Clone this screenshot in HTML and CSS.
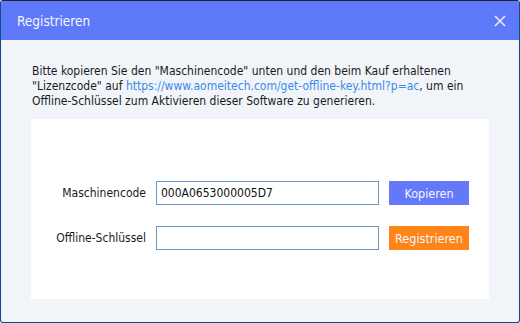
FILE: index.html
```html
<!DOCTYPE html>
<html lang="de">
  <head>
    <meta charset="UTF-8" />
    <title>Registrieren</title>
    <link rel="stylesheet" href="styles.css">
  </head>
  <body>
    <div class="window">
      <div class="titlebar">
        <span class="title">Registrieren</span>
        <svg class="close" width="14" height="14" viewBox="0 0 14 14" aria-label="Schließen">
          <path d="M2 2 L12 12 M12 2 L2 12" stroke="#e3e8ff" stroke-width="1.6" fill="none" />
        </svg>
      </div>
      <div class="content">
        <div class="intro">
          <span class="line">Bitte kopieren Sie den "Maschinencode" unten und den beim Kauf erhaltenen</span>
          <span class="line">"Lizenzcode" auf <a href="#">https://www.aomeitech.com/get-offline-key.html?p=ac</a>, um ein</span>
          <span class="line">Offline-Schlüssel zum Aktivieren dieser Software zu generieren.</span>
        </div>
        <div class="panel">
          <div class="form-grid">
            <label for="machine">Maschinencode</label>
            <input type="text" id="machine" value="000A0653000005D7" />
            <button type="button" class="btn-copy">Kopieren</button>
            <label for="key">Offline-Schlüssel</label>
            <input type="text" id="key" />
            <button type="button" class="btn-register">Registrieren</button>
          </div>
        </div>
      </div>
    </div>
  </body>
</html>
```

FILE: styles.css
```css
body {
  margin: 0;
  font-family: Tahoma, "DejaVu Sans Condensed", "Liberation Sans", sans-serif;
  background-color: #ffffff;
}
.window {
  width: 520px;
  height: 323px;
  box-sizing: border-box;
  border: 1px solid #0c4a94;
  border-top-color: #1b2233;
  border-radius: 3px;
  background-color: #f1f5fa;
  overflow: hidden;
}
.titlebar {
  height: 39px;
  background-color: #5f7af9;
  display: flex;
  align-items: center;
  justify-content: space-between;
  padding: 0 12px 0 16px;
}
.title {
  color: #f2f4ff;
  font-size: 13.5px;
}
.close {
  display: block;
}
.content {
  padding: 0 30px;
}
.intro {
  margin: 24px 0 0;
  padding-left: 1px;
  font-size: 12px;
  line-height: 15px;
  color: #1a1a1a;
}
.intro .line {
  display: block;
  white-space: nowrap;
}
.intro a {
  color: #3b8ae8;
  text-decoration: none;
}
.panel {
  margin-top: 10px;
  height: 180px;
  background-color: #ffffff;
}
.form-grid {
  display: grid;
  grid-template-columns: 114px 223px 80px;
  column-gap: 10px;
  row-gap: 21px;
  padding-top: 62px;
  padding-left: 1px;
  align-items: center;
}
label {
  text-align: right;
  font-size: 12px;
  color: #1a1a1a;
}
input[type='text'] {
  box-sizing: border-box;
  height: 24px;
  width: 223px;
  border: 1px solid #6f95c6;
  padding: 0 4px;
  font-family: inherit;
  font-size: 12px;
  color: #111;
  outline: none;
}
button {
  height: 24px;
  border: none;
  font-family: inherit;
  font-size: 12.5px;
  color: #f4f5ff;
  padding: 0;
  cursor: pointer;
}
.btn-copy {
  background-color: #6479fa;
}
.btn-register {
  background-color: #ff8516;
}
```
